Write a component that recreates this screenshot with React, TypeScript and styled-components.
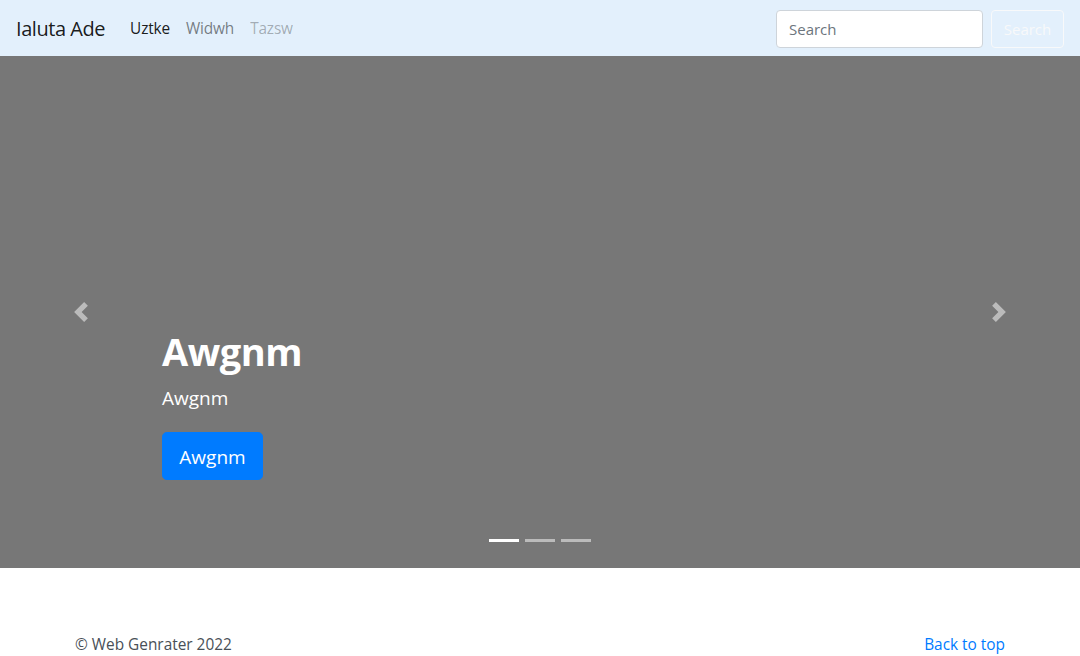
import React from "react";
import styled, { createGlobalStyle } from "styled-components";

const Global = createGlobalStyle`
  * { box-sizing: border-box; }
  body {
    margin: 0;
    font-family: "Open Sans", "Noto Sans", sans-serif;
    font-size: 16px;
    line-height: 1.5;
    color: #212529;
    background: #fff;
  }
`;

const Navbar = styled.nav`
  height: 56px;
  display: flex;
  align-items: center;
  padding: 9px 16px 7px;
  background: #e3f0fc;
`;

const Brand = styled.a`
  font-size: 20px;
  line-height: 30px;
  padding: 5px 0;
  margin-right: 17px;
  color: rgba(0, 0, 0, 0.9);
  text-decoration: none;
  letter-spacing: -0.45px;
`;

const NavList = styled.ul`
  display: flex;
  list-style: none;
  margin: 0;
  padding: 0;
  flex: 1;
`;

const NavLink = styled.a<{ $state: "active" | "normal" | "disabled" }>`
  display: block;
  padding: 8px;
  font-size: 15.4px;
  letter-spacing: -0.15px;
  text-decoration: none;
  color: ${(p) =>
    p.$state === "active"
      ? "rgba(0,0,0,0.9)"
      : p.$state === "disabled"
      ? "rgba(0,0,0,0.3)"
      : "rgba(0,0,0,0.5)"};
`;

const SearchForm = styled.form`
  display: flex;
  align-items: center;
  margin: 0;
`;

const SearchInput = styled.input`
  width: 207px;
  height: 38px;
  padding: 6px 12px;
  font-family: inherit;
  font-size: 15px;
  color: #495057;
  background: #fff;
  border: 1px solid #ced4da;
  border-radius: 4px;
  margin-right: 8px;
  &::placeholder { color: #6c757d; }
`;

const OutlineButton = styled.button`
  width: 73px;
  height: 38px;
  font-family: inherit;
  font-size: 15px;
  color: #f8f9fa;
  background: transparent;
  border: 1px solid #f8f9fa;
  border-radius: 4px;
  padding: 6px 10px;
`;

const Carousel = styled.section`
  position: relative;
  height: 512px;
  background: #777;
  margin-bottom: 65px;
  display: flex;
  align-items: center;
`;

const Control = styled.a`
  width: 15%;
  align-self: stretch;
  display: flex;
  align-items: center;
  justify-content: center;
  opacity: 0.5;
`;

const Slide = styled.div`
  flex: 1;
  align-self: stretch;
  display: flex;
  flex-direction: column;
  justify-content: flex-end;
  padding-bottom: 48px;
`;

const Caption = styled.div`
  padding: 20px 0;
  color: #fff;
  text-align: left;
`;

const Title = styled.h1`
  margin: 0 0 8px;
  font-size: 38px;
  font-weight: 700;
  line-height: 50px;
  letter-spacing: -0.5px;
`;

const Lead = styled.p`
  margin: 0 0 20px;
  font-size: 19px;
  line-height: 28px;
`;

const ButtonRow = styled.p`
  margin: 0 0 20px;
`;

const PrimaryButton = styled.a`
  display: inline-block;
  width: 101px;
  height: 48px;
  line-height: 48px;
  text-align: center;
  font-size: 19px;
  color: #fff;
  background: #007bff;
  border: 1px solid #007bff;
  border-radius: 4.8px;
  text-decoration: none;
`;

const Indicators = styled.ol`
  position: absolute;
  left: 0;
  right: 0;
  bottom: 26px;
  display: flex;
  justify-content: center;
  list-style: none;
  margin: 0;
  padding: 0;
`;

const Indicator = styled.li<{ $active?: boolean }>`
  width: 30px;
  height: 3px;
  margin: 0 3px;
  background: #fff;
  opacity: ${(p) => (p.$active ? 1 : 0.5)};
`;

const Footer = styled.footer`
  width: 960px;
  margin: 0 auto;
  padding: 0 15px;
  display: flex;
  justify-content: space-between;
  font-size: 15.4px;
  line-height: 24px;
  color: #212529;
`;

const FooterText = styled.p`
  margin: 0;
  color: #495057;
`;

const FooterLink = styled.a`
  color: #007bff;
  text-decoration: none;
`;

const Chevron = ({ dir }: { dir: "prev" | "next" }) => (
  <svg width="20" height="20" viewBox="0 0 8 8" fill="#fff">
    <path
      d={
        dir === "prev"
          ? "M5.25 0l-4 4 4 4 1.5-1.5L4.25 4l2.5-2.5L5.25 0z"
          : "M2.75 0l-1.5 1.5L3.75 4l-2.5 2.5L2.75 8l4-4-4-4z"
      }
    />
  </svg>
);

export default function App() {
  return (
    <>
      <Global />
      <Navbar>
        <Brand href="#">Ialuta Ade</Brand>
        <NavList>
          <li><NavLink $state="active" href="#">Uztke</NavLink></li>
          <li><NavLink $state="normal" href="#">Widwh</NavLink></li>
          <li><NavLink $state="disabled" href="#">Tazsw</NavLink></li>
        </NavList>
        <SearchForm onSubmit={(e) => e.preventDefault()}>
          <SearchInput type="text" placeholder="Search" />
          <OutlineButton type="submit">Search</OutlineButton>
        </SearchForm>
      </Navbar>
      <Carousel>
        <Control href="#"><Chevron dir="prev" /></Control>
        <Slide>
          <Caption>
            <Title>Awgnm</Title>
            <Lead>Awgnm</Lead>
            <ButtonRow><PrimaryButton href="#">Awgnm</PrimaryButton></ButtonRow>
          </Caption>
        </Slide>
        <Control href="#"><Chevron dir="next" /></Control>
        <Indicators>
          <Indicator $active />
          <Indicator />
          <Indicator />
        </Indicators>
      </Carousel>
      <Footer>
        <FooterText>© Web Genrater 2022</FooterText>
        <FooterLink href="#">Back to top</FooterLink>
      </Footer>
    </>
  );
}
